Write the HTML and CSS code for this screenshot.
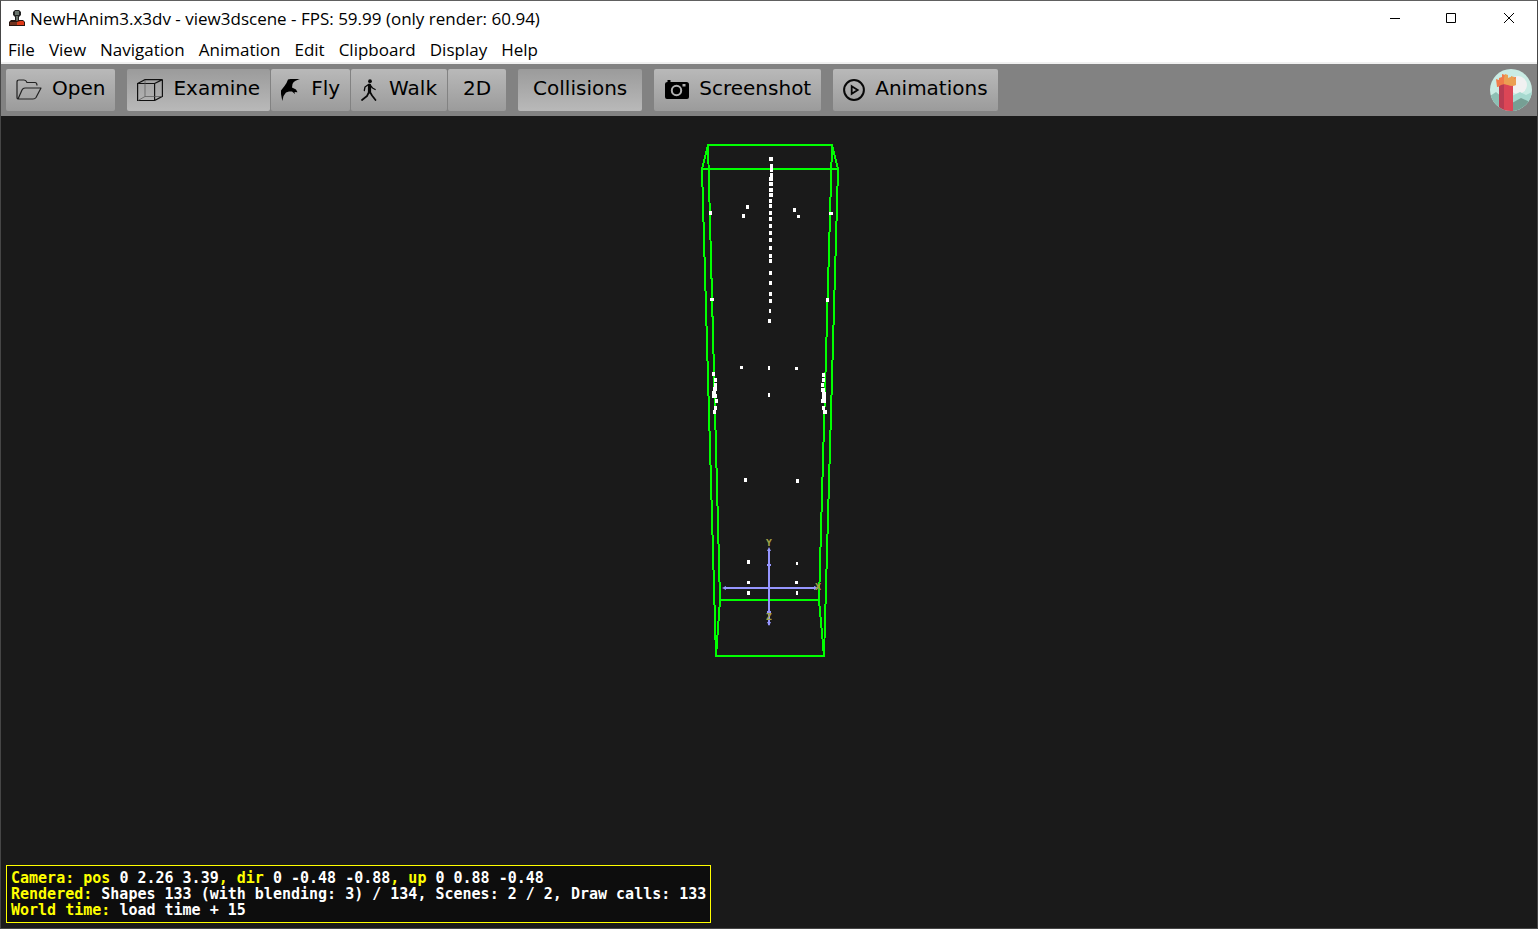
FILE: index.html
```html
<!DOCTYPE html>
<html lang="en">
<head>
<meta charset="utf-8">
<title>NewHAnim3.x3dv - view3dscene</title>
<link rel="stylesheet" href="styles.css">
</head>
<body>
<div class="window">
  <header class="titlebar">
    <svg class="app-icon" width="16" height="18" viewBox="0 0 16 18" aria-hidden="true">
      <path d="M4 2l2-2h4l2 2v3l-2 2H6L4 5z" fill="#222"/>
      <path d="M6 1h4v4H6z" fill="#69736c"/>
      <path d="M6 6h4v6H6z" fill="#222"/><path d="M7 6h2v5H7z" fill="#69736c"/>
      <path d="M2 10h4l2 1 2-1h4l2 2v4H0v-4z" fill="#29150f"/>
      <path d="M1 12h7v3H1z" fill="#70331f"/><path d="M8 12l3-1h3l1 1v3H8z" fill="#e03a18"/>
    </svg>
    <h1 class="title">NewHAnim3.x3dv - view3dscene - FPS: 59.99 (only render: 60.94)</h1>
    <div class="controls">
      <button class="control" aria-label="Minimize"><svg width="12" height="12" viewBox="0 0 12 12"><path d="M1 5.500h10"/></svg></button>
      <button class="control" aria-label="Maximize"><svg width="12" height="12" viewBox="0 0 12 12"><path d="M.5.500h9v9H.5z"/></svg></button>
      <button class="control" aria-label="Close"><svg width="12" height="12" viewBox="0 0 12 12"><path d="M1 0l10 10M11 0L1 10"/></svg></button>
    </div>
  </header>
  <nav class="menu">
    <button>File</button><button>View</button><button>Navigation</button><button>Animation</button><button>Edit</button><button>Clipboard</button><button>Display</button><button>Help</button>
  </nav>
  <div class="toolbar">
    <button class="tool"><svg width="26" height="22" viewBox="0 0 26 22" fill="none" stroke="#222" stroke-width="1.200" stroke-linejoin="round"><path d="M1 18V3q0-2 2-2h5q2 0 3 2.500h8q2 0 2 3M2 20L6 11q1-2 3-2h16l-5 9.500q-1 1.500-3 1.500H2q-1 0-1-2"/></svg>Open</button>
    <div class="group">
      <button class="tool pressed"><svg width="26" height="22" viewBox="0 0 26 22" fill="none" stroke="#111" stroke-width="1.200"><path d="M.6 4.500h17v17H.6zM.6 4.500L8 .6h17.400l-7.800 3.900M25.400.6v16.800l-7.800 4.100"/><path d="M8 1v16.500h17M8 17.500l-7 4" stroke="#555" stroke-width=".7"/></svg>Examine</button>
      <button class="tool"><svg width="20" height="22" viewBox="0 0 20 22"><path d="M19 .3Q12-.8 7 .5L5.500 4 3.500 7 0 11.500V15l1.300 7L2.500 17 5 13.500 8 12.500l3 0 3 2.500-.5-2 3 .2-1.500-2.700-4-2L11.500 5Q13 1.500 19 .3z"/></svg>Fly</button>
      <button class="tool"><svg width="18" height="22" viewBox="0 0 18 22" fill="none" stroke="#080808" stroke-linecap="round" stroke-linejoin="round"><circle cx="9" cy="2.200" r="1.900" fill="#080808" stroke="none"/><path d="M8.500 6v7" stroke-width="3.200"/><path d="M7.500 5.500L4 8l-.7 3.500M9 6l2.500 3 2.700 1.500" stroke-width="1.300"/><path d="M8 13l-2 4-5 4M9 13l2 3.500 3.500 4.500" stroke-width="1.700"/></svg>Walk</button>
      <button class="tool plain">2D</button>
    </div>
    <button class="tool plain pressed">Collisions</button>
    <button class="tool"><svg width="25" height="22" viewBox="-1 0 25 22"><path d="M2.500 1h3v2h16q2.500 0 2.500 2.500V18q0 2-2 2H2q-2 0-2-2V5q0-2 2.500-2z"/><circle cx="11.500" cy="11.500" r="4.700" fill="none" stroke="#b1b1b1" stroke-width="2"/><path d="M17.500 5h3v2.500h-3z" fill="#b1b1b1"/></svg>Screenshot</button>
    <button class="tool"><svg width="22" height="22" viewBox="0 0 22 22" fill="none" stroke="#080808" stroke-width="2"><circle cx="11" cy="11" r="9.900"/><path d="M8.700 7.200l6 3.800-6 3.800z" stroke-width="1.800"/></svg>Animations</button>
    <svg class="logo" width="42" height="42" viewBox="0 0 42 42" role="img" aria-label="Castle Game Engine">
      <defs><clipPath id="disc"><circle cx="21" cy="21" r="21"/></clipPath></defs>
      <g clip-path="url(#disc)"><path fill="#caece4" d="M0 0h42v42H0z"/><circle cx="28" cy="16" r="9" fill="#f1f1f1"/><path fill="#8dbeb3" d="M0 27l6-4 6 5v14H0z"/><path fill="#a6d9cf" d="M22 27l8-4 6 3 6-3v19H22z"/><path fill="#769f94" d="M22 34l9-5 11 5v8H22z"/><path fill="#b83c52" d="M9 15h6v27H9z"/><path fill="#dc4656" d="M14 14h9v28h-9z"/><path fill="#f07b4a" d="M6 10l3 1V9l3-1V5l3 1 3 3 8-1v8l-5 1-6-2-4 1-3 2H7z"/><path fill="#eba052" d="M14 9l1-4 3 1v3l3-1V7l3 1v2l2-1v7l-4 1-8-2z"/></g>
    </svg>
  </div>
  <main class="viewport">
    <svg class="scene" width="160" height="560" viewBox="689 116 160 560" role="img" aria-label="Joint points in a bounding box">
      <g fill="none" stroke="#0f0" stroke-width="2" shape-rendering="crispEdges">
        <path d="M708 145H832L838 169H702Z"/>
        <path d="M702 169L716 656H824L838 169"/>
        <path d="M708 145L720 600H819L832 145M720 600L716 656M819 600L824 656"/>
      </g>
      <g fill="none" stroke="#fff" stroke-width="4" shape-rendering="crispEdges">
        <path d="M769 159h4M770 166h3M770 170h3M770 175h3M769 179h4M769 184h4M769 190h4M769 195h4M769 201h3M769 206h3M769 213h3M769 219h3M769 226h3M769 233h3M769 240h3M769 248h3M769 256h3M769 261h3M769 273h3M769 283h3M769 294h3M769 301h3M769 311h2M768 321h3"/>
        <path d="M746 207h3M742 216h3M793 210h3M709 213h3M826 300h3M768 368h2M768 395h2M744 480h3M796 481h3M747 562h3M796 593h2M747 593h3"/>
        <path d="M797 216.500h3M829 213.500h4M710 299.500h4M740 367.500h3M795 368.500h3M796 563.500h2M747 582.500h3M795 582.500h3" stroke-width="3"/>
        <path d="M712 374h3M714 380h3M714 385h3M713 389h4M712 393h4M712 396h5M715 401h3M714 408h3M713 412h3M822 375h3M822 380h3M821 385h3M821 390h4M822 394h4M822 397h4M821 401h5M822 408h3M823 412h4"/>
      </g>
      <g fill="#9696ff">
        <path d="M769 549v76M724 588h93" fill="none" stroke="#9696ff" stroke-width="2"/>
        <path d="M769 547l2 4h-4zM767 564h4v2h-4zM767 611h4v3h-4zM767 622h4l-2 4zM722 588l4-2v4zM819 588l-5-2v4z"/>
      </g>
      <g class="axis-label"><text x="769" y="546">Y</text><text x="818" y="590">X</text><text x="769" y="620">Z</text></g>
    </svg>
    <section class="status" aria-label="Scene status">
      <p>Camera: pos <b>0 2.26 3.39</b>, dir <b>0 -0.48 -0.88</b>, up <b>0 0.88 -0.48</b></p>
      <p>Rendered: <b>Shapes 133 (with blending: 3) / 134, Scenes: 2 / 2, Draw calls: 133</b></p>
      <p>World time: <b>load time + 15</b></p>
    </section>
  </main>
</div>
</body>
</html>
```
FILE: styles.css
```css
* { box-sizing: border-box; }
body { margin: 0; background: #1a1a1a; }
button { border: 0; padding: 0; background: none; color: #000; font: inherit; white-space: nowrap; }
.window {
  display: flex;
  flex-direction: column;
  height: 100vh;
  border: 1px solid #464646;
  border-top-color: #606060;
  background: #fff;
  font: 17px/24px "Open Sans", sans-serif;
}
.titlebar { display: flex; align-items: center; height: 35px; padding-left: 8px; gap: 5px; }
.title { margin: 0; font-size: 17px; font-weight: 400; white-space: nowrap; }
.controls { display: flex; align-self: stretch; margin-left: auto; }
.control { display: flex; align-items: center; justify-content: center; width: 57px; }
.control svg { fill: none; stroke: #000; stroke-width: 1; }
.menu { display: flex; align-items: center; gap: 14px; height: 28px; padding: 2px 7px 0; border-bottom: 2px solid #f0f0f0; }
.toolbar {
  display: flex;
  align-items: center;
  gap: 12px;
  height: 52px;
  padding: 0 5px;
  background: #828282;
  font: 20px/28px "DejaVu Sans", sans-serif;
}
.group { display: flex; gap: 1px; }
.tool {
  display: flex;
  align-items: center;
  gap: 10px;
  height: 42px;
  padding: 0 10px 4px;
  border-radius: 2px;
  background: linear-gradient(#b9b9b9, #9b9b9b);
}
.tool svg { margin-top: 4px; }
.pressed { background: linear-gradient(#9b9b9b, #b9b9b9); }
.plain { padding: 0 15px 4px; }
.logo { margin-left: auto; }
.viewport { position: relative; display: flex; flex: 1; justify-content: center; align-items: flex-start; background: #1a1a1a; }
.axis-label { fill: #a0a048; font: bold 8px "DejaVu Sans", sans-serif; text-anchor: middle; }
.status {
  position: absolute;
  left: 5px;
  bottom: 5px;
  padding: 4px;
  border: 1px solid #ff0;
  background: #0d0d0d;
  color: #ff0;
  font: bold 15px/16px "DejaVu Sans Mono", monospace;
  white-space: nowrap;
}
.status p { margin: 0; }
.status b { color: #fff; }
```
